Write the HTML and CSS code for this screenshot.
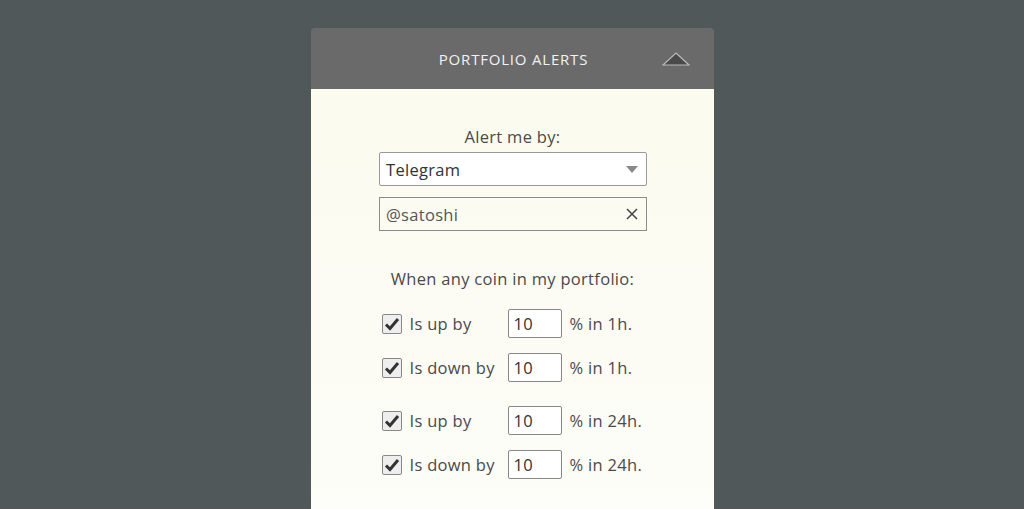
FILE: index.html
```html
<!DOCTYPE html>
<html>
<head>
<meta charset="utf-8">
<link rel="stylesheet" href="styles.css">
</head>
<body>
<div class="panel">
  <div class="header">
    <span class="title">PORTFOLIO ALERTS</span>
    <svg class="toggle" width="28" height="14" viewBox="0 0 28 14"><polygon points="14,1 27,13 1,13" fill="#4a4a4a" stroke="#b8b8b8" stroke-width="1.2"/></svg>
  </div>
  <div class="body">
    <div class="label">Alert me by:</div>
    <div class="field select">
      <span>Telegram</span>
      <svg width="12" height="7" viewBox="0 0 12 7"><polygon points="0,0 12,0 6,7" fill="#8a8a8a"/></svg>
    </div>
    <div class="field text">
      <span>@satoshi</span>
      <svg width="12" height="12" viewBox="0 0 12 12"><path d="M1 1L11 11M11 1L1 11" stroke="#444" stroke-width="1.5" fill="none"/></svg>
    </div>
    <div class="label second">When any coin in my portfolio:</div>
    <div class="group">
      <div class="row"><span class="check"><svg width="16" height="14" viewBox="0 0 16 14"><path d="M2 7.5L6 11.5L14 2" stroke="#333" stroke-width="3" fill="none"/></svg></span><span class="what">Is up by</span><span class="num">10</span><span class="unit">% in 1h.</span></div>
      <div class="row"><span class="check"><svg width="16" height="14" viewBox="0 0 16 14"><path d="M2 7.5L6 11.5L14 2" stroke="#333" stroke-width="3" fill="none"/></svg></span><span class="what">Is down by</span><span class="num">10</span><span class="unit">% in 1h.</span></div>
    </div>
    <div class="group">
      <div class="row"><span class="check"><svg width="16" height="14" viewBox="0 0 16 14"><path d="M2 7.5L6 11.5L14 2" stroke="#333" stroke-width="3" fill="none"/></svg></span><span class="what">Is up by</span><span class="num">10</span><span class="unit">% in 24h.</span></div>
      <div class="row"><span class="check"><svg width="16" height="14" viewBox="0 0 16 14"><path d="M2 7.5L6 11.5L14 2" stroke="#333" stroke-width="3" fill="none"/></svg></span><span class="what">Is down by</span><span class="num">10</span><span class="unit">% in 24h.</span></div>
    </div>
  </div>
</div>
</body>
</html>
```
FILE: styles.css
```css
html, body {
  margin: 0;
  padding: 0;
  height: 100%;
  overflow: hidden;
}
body {
  background: #515859;
  font-family: "Open Sans", "DejaVu Sans", sans-serif;
  color: #444;
}
.panel {
  width: 403px;
  margin: 28px 0 0 311px;
}
.header {
  height: 61px;
  background: #6a6a6a;
  border-radius: 4px 4px 0 0;
  display: flex;
  align-items: center;
  justify-content: center;
  position: relative;
}
.title {
  color: #f2f2f2;
  font-size: 15px;
  letter-spacing: 0.8px;
  margin-left: 2px;
}
.toggle {
  position: absolute;
  right: 24px;
  top: 24px;
}
.body {
  height: 440px;
  background: linear-gradient(#fbfbef, #fdfdf9);
  display: flex;
  flex-direction: column;
  align-items: center;
  padding-top: 38px;
  box-sizing: border-box;
}
.label {
  font-size: 16.5px;
  letter-spacing: 0.3px;
  color: #4a4a4a;
  height: 20px;
  line-height: 20px;
}
.label.second {
  margin-top: 38px;
  margin-bottom: 20px;
}
.field {
  width: 268px;
  height: 34px;
  box-sizing: border-box;
  border: 1px solid #8c8c8c;
  display: flex;
  align-items: center;
  justify-content: space-between;
  padding: 0 8px 0 6px;
  font-size: 16.5px;
  letter-spacing: 0.3px;
  margin-left: 1px;
}
.select {
  margin-top: 5px;
  background: #fff;
  color: #333;
  border-radius: 2px;
  border-color: #999;
}
.text {
  margin-top: 11px;
  color: #555;
}
.group {
  display: flex;
  flex-direction: column;
  gap: 15px;
  margin-bottom: 24px;
}
.row {
  display: flex;
  align-items: center;
  height: 29px;
  width: 266px;
  padding-left: 2px;
  box-sizing: border-box;
  font-size: 16.5px;
  letter-spacing: 0.3px;
  color: #4a4a4a;
}
.check {
  width: 20px;
  height: 20px;
  box-sizing: border-box;
  border: 1px solid #888;
  background: #eee;
  border-radius: 2px;
  display: flex;
  align-items: center;
  justify-content: center;
}
.what {
  margin-left: 8px;
  width: 98px;
}
.num {
  width: 54px;
  height: 29px;
  box-sizing: border-box;
  border: 1px solid #888;
  border-radius: 2px;
  background: #fff;
  display: flex;
  align-items: center;
  padding-left: 5px;
  color: #333;
}
.unit {
  margin-left: 8px;
}
```
